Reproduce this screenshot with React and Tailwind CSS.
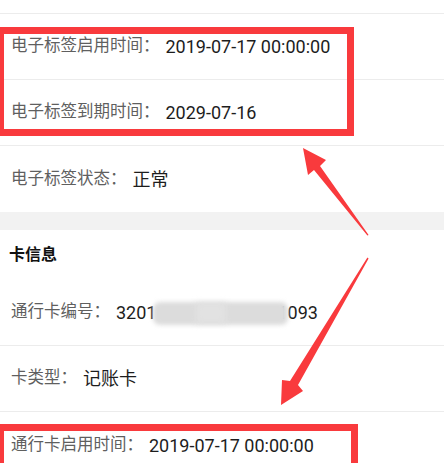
import React from 'react';

const font = { fontFamily: 'Roboto, "Noto Sans CJK SC", sans-serif' };

const Row = ({ label, children, last }) => (
  <div className={`h-[66px] flex items-center pl-[11px] ${last ? '' : 'border-b border-[#ececec]'}`}>
    <span className="text-[16.5px] text-[#5f5f5f] tracking-normal">{label}：</span>
    <span className="ml-[6px] text-[18px] text-[#1d1d1d]">{children}</span>
  </div>
);

const Arrows = () => (
  <svg className="absolute inset-0 pointer-events-none" width="444" height="463" viewBox="0 0 444 463">
    <polygon fill="#f93a3d" points="303,148 326,160 320,166 368.6,235 367.4,235.6 314,170 308,175" />
    <polygon fill="#f93a3d" points="368.6,258.4 298,385 303,391 281,405 282,380 290,381 367.4,257.6" />
  </svg>
);

export default function App() {
  return (
    <div className="relative w-[444px] h-[463px] overflow-hidden bg-white" style={font}>
      <div className="h-[14px] border-b border-[#ececec]" />
      <Row label="电子标签启用时间">2019-07-17 00:00:00</Row>
      <Row label="电子标签到期时间">2029-07-16</Row>
      <Row label="电子标签状态" last>正常</Row>
      <div className="h-[18px] bg-[#f2f2f2]" />
      <div className="h-[50px] flex items-center pl-[9px]">
        <span className="text-[16px] font-bold text-[#111]">卡信息</span>
      </div>
      <Row label="通行卡编号">
        <span className="inline-flex items-center">
          3201
          <span className="relative z-10 inline-block w-[121px] h-[20px]">
            <span className="absolute -left-[3px] -right-[11px] -top-[1px] -bottom-[2px] rounded-[7px] bg-[#dcdcdc] blur-[2px]" />
            <span className="absolute left-[40px] w-[30px] top-0 bottom-0 bg-[#e2e2e2] blur-[3px]" />
          </span>
          1093
        </span>
      </Row>
      <Row label="卡类型">记账卡</Row>
      <Row label="通行卡启用时间" last>2019-07-17 00:00:00</Row>

      <div className="absolute left-[-3px] top-[27px] w-[357px] h-[109px] border-[7px] border-[#f93a3d]" />
      <div className="absolute left-[-3px] top-[424px] w-[361px] h-[80px] border-[7px] border-[#f93a3d]" />
      <Arrows />
    </div>
  );
}
